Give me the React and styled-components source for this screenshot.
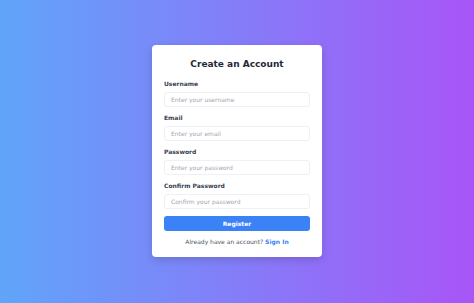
import React from "react";
import styled, { createGlobalStyle } from "styled-components";

const GlobalStyle = createGlobalStyle`
	html, body {
		margin: 0;
		padding: 0;
	}
	body {
		font-family: "DejaVu Sans", sans-serif;
	}
`;

const Page = styled.div`
	width: 474px;
	height: 303px;
	display: flex;
	align-items: center;
	justify-content: center;
	background: linear-gradient(90deg, #60a5fa 0%, #a855f7 100%);
`;

const Card = styled.form`
	width: 170px;
	box-sizing: border-box;
	padding: 13px 12px 11px;
	margin-top: -2px;
	background: #ffffff;
	border-radius: 4px;
	box-shadow: 0 3px 8px rgba(0, 0, 0, 0.15);
	display: flex;
	flex-direction: column;
`;

const Title = styled.h2`
	margin: 0 0 9px;
	font-size: 9px;
	font-weight: 700;
	text-align: center;
	color: #1f2937;
	line-height: 12px;
`;

const Field = styled.div`
	display: flex;
	flex-direction: column;
	margin-bottom: 6px;
`;

const Label = styled.label`
	font-size: 6px;
	font-weight: 700;
	color: #374151;
	line-height: 9px;
	margin-bottom: 4px;
`;

const Input = styled.input`
	height: 15px;
	box-sizing: border-box;
	border: 1px solid #eef0f2;
	border-radius: 3px;
	padding: 0 6px;
	font-family: "DejaVu Sans", sans-serif;
	font-size: 6px;
	color: #374151;
	outline: none;
	&::placeholder {
		color: #a0a6b0;
	}
`;

const Button = styled.button`
	height: 15px;
	margin-top: 1px;
	border: none;
	border-radius: 3px;
	background: #3b82f6;
	color: #ffffff;
	font-family: "DejaVu Sans", sans-serif;
	font-size: 6px;
	font-weight: 700;
	padding: 0;
`;

const Footer = styled.p`
	margin: 6px 0 0;
	font-size: 6px;
	line-height: 9px;
	text-align: center;
	color: #4b5563;
`;

const SignIn = styled.a`
	color: #3b82f6;
	font-weight: 700;
	text-decoration: none;
`;

const fields = [
	{ label: "Username", type: "text", placeholder: "Enter your username" },
	{ label: "Email", type: "email", placeholder: "Enter your email" },
	{ label: "Password", type: "password", placeholder: "Enter your password" },
	{ label: "Confirm Password", type: "password", placeholder: "Confirm your password" }
];

export default function App() {
	return (
		<>
			<GlobalStyle />
			<Page>
				<Card onSubmit={e => e.preventDefault()}>
					<Title>Create an Account</Title>
					{fields.map(f => (
						<Field key={f.label}>
							<Label>{f.label}</Label>
							<Input type={f.type} placeholder={f.placeholder} />
						</Field>
					))}
					<Button type="submit">Register</Button>
					<Footer>
						Already have an account? <SignIn href="#">Sign In</SignIn>
					</Footer>
				</Card>
			</Page>
		</>
	);
}
